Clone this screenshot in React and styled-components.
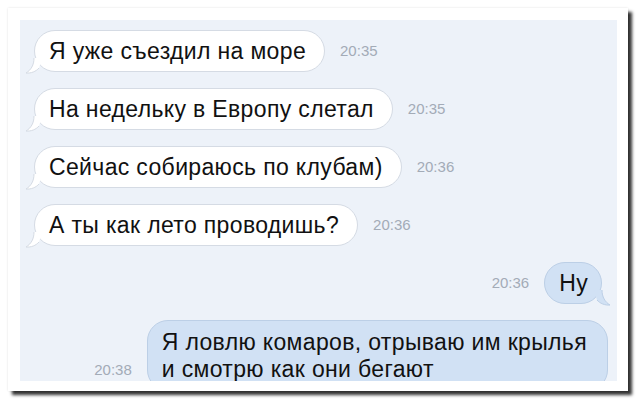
import React from 'react';
import styled, { createGlobalStyle } from 'styled-components';

const GlobalStyle = createGlobalStyle`
  html, body {
    margin: 0;
    padding: 0;
    background: #ffffff;
  }
  body {
    font-family: "Liberation Sans", Arial, sans-serif;
  }
`;

const StyledPage = styled.div`
  width: 640px;
  height: 403px;
  padding: 8px 12px 12px 8px;
  box-sizing: border-box;
  overflow: hidden;
`;

const StyledFrame = styled.div`
  width: 620px;
  height: 383px;
  box-sizing: border-box;
  padding: 12px 11px 10px 12px;
  background: #ffffff;
  box-shadow: 4px 4px 3px rgba(0, 0, 0, 0.8), 0 0 2px rgba(0, 0, 0, 0.12);
`;

const StyledPanel = styled.div`
  height: 100%;
  box-sizing: border-box;
  padding: 10px 15px 0 14px;
  background: #edf2f9;
  overflow: hidden;
  display: flex;
  flex-direction: column;
  gap: 16px;
`;

const StyledRow = styled.div`
  display: flex;
  align-items: flex-end;
  justify-content: flex-start;
  flex-direction: ${(p) => (p.$out ? 'row-reverse' : 'row')};
  gap: 15px;
  flex-shrink: 0;
`;

const StyledBubble = styled.div`
  position: relative;
  padding: ${(p) => (p.$flush ? '8px 20px 7px 14px' : `7px ${p.$out ? 13 : 18}px 7px 14px`)};
  margin-right: ${(p) => (p.$flush ? -6 : 0)}px;
  border: 1px solid ${(p) => (p.$out ? '#bccfe6' : '#d5dbe4')};
  background: ${(p) => (p.$out ? '#d1e1f4' : '#ffffff')};
  border-radius: 21px;
  color: #111111;
  font-size: 23px;
  line-height: ${(p) => (p.$flush ? 27 : 26)}px;
  letter-spacing: 0.35px;
  white-space: nowrap;
`;

const StyledTime = styled.span`
  margin-bottom: 13px;
  color: #a3abb7;
  font-size: 15px;
  line-height: 17px;
`;

const StyledTail = styled.svg`
  position: absolute;
  bottom: -3px;
  ${(p) => (p.$out ? 'right: -10px; transform: scaleX(-1);' : 'left: -10px;')}
  width: 17px;
  height: 16px;
  overflow: visible;
`;

const Tail = ({ out }) => (
  <StyledTail $out={out} viewBox="0 0 17 16">
    <path d="M9 0 C9 7 6 12 1 15 C6 15.5 11 13.5 14 10 L17 0 Z" fill={out ? '#d1e1f4' : '#ffffff'} />
    <path
      d="M9 0 C9 7 6 12 1 15 C6 15.5 11 13.5 14 10"
      fill="none"
      stroke={out ? '#bccfe6' : '#d5dbe4'}
      strokeWidth="1"
    />
  </StyledTail>
);

const messages = [
  { text: 'Я уже съездил на море', time: '20:35' },
  { text: 'На недельку в Европу слетал', time: '20:35' },
  { text: 'Сейчас собираюсь по клубам)', time: '20:36' },
  { text: 'А ты как лето проводишь?', time: '20:36' },
  { text: 'Ну', time: '20:36', out: true, tail: true },
  {
    text: ['Я ловлю комаров, отрываю им крылья', 'и смотрю как они бегают'],
    time: '20:38',
    out: true,
  },
];

const App = () => (
  <>
    <GlobalStyle />
    <StyledPage>
      <StyledFrame>
        <StyledPanel>
          {messages.map((m, i) => (
            <StyledRow key={i} $out={m.out}>
              <StyledBubble $out={m.out} $flush={m.out && !m.tail}>
                {(m.tail || !m.out) && <Tail out={m.out} />}
                {Array.isArray(m.text)
                  ? m.text.map((line) => <div key={line}>{line}</div>)
                  : m.text}
              </StyledBubble>
              <StyledTime>{m.time}</StyledTime>
            </StyledRow>
          ))}
        </StyledPanel>
      </StyledFrame>
    </StyledPage>
  </>
);

export default App;
